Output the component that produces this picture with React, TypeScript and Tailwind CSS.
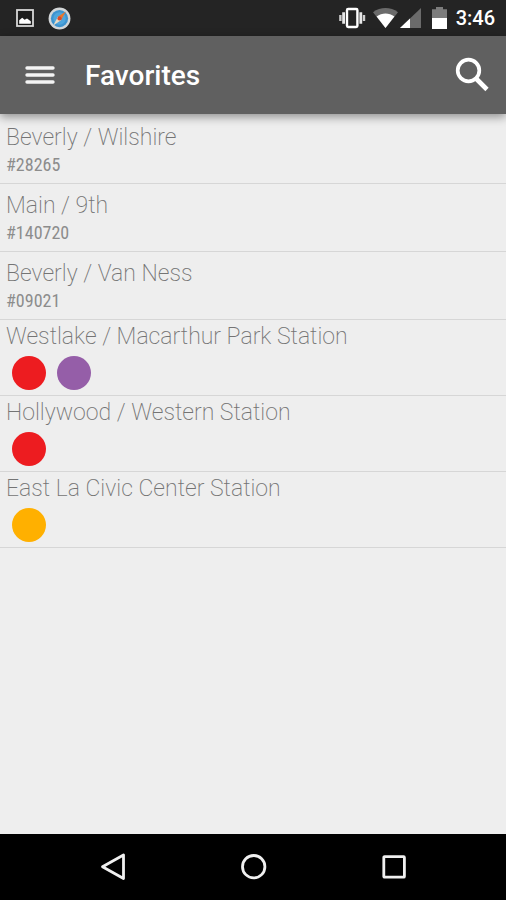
import React from "react";

type Favorite = {
  name: string;
  stop?: string;
  lines?: { label: string; color: string }[];
};

const RED = { label: "Red Line", color: "bg-[#ed1c20]" };
const PURPLE = { label: "Purple Line", color: "bg-[#955ea8]" };
const GOLD = { label: "Gold Line", color: "bg-[#ffb000]" };

const favorites: Favorite[] = [
  { name: "Beverly / Wilshire", stop: "#28265" },
  { name: "Main / 9th", stop: "#140720" },
  { name: "Beverly / Van Ness", stop: "#09021" },
  { name: "Westlake / Macarthur Park Station", lines: [RED, PURPLE] },
  { name: "Hollywood / Western Station", lines: [RED] },
  { name: "East La Civic Center Station", lines: [GOLD] },
];

function StatusBar() {
  return (
    <div className="flex h-9 shrink-0 items-center bg-[#242424] pl-4 pr-[11px]">
      <svg width="18" height="18" viewBox="0 0 18 18" aria-hidden="true">
        <rect x="1" y="1" width="16" height="16" fill="#1c1c1c" stroke="#d8d8d8" strokeWidth="1.8" />
        <path d="M3.2 14.8V11.2L6.2 8.8L8.6 10.8L11 9.6L14.8 12.2V14.8Z" fill="#fff" />
      </svg>
      <svg className="ml-[14px]" width="23" height="23" viewBox="0 0 24 24" aria-hidden="true">
        <circle cx="12" cy="12" r="11.4" fill="#d3d6d8" />
        <circle cx="12" cy="12" r="9" fill="#3d93cf" />
        <circle cx="12" cy="12" r="6.5" fill="#4ea5dc" />
        <path d="M18.6 4.8L10.3 10.2L13.6 13.7Z" fill="#e8762c" />
        <path d="M5.4 19.2L10.3 10.2L13.6 13.7Z" fill="#e9dcc8" />
        <circle cx="12" cy="12" r="2.2" fill="#d9482b" />
      </svg>
      <div className="ml-auto flex items-center">
        <svg width="28" height="22" viewBox="0 0 28 22" aria-hidden="true">
          <rect x="9" y="2" width="10.4" height="18" rx="1.2" fill="none" stroke="#fff" strokeWidth="2.4" />
          <path d="M5.6 5.2V16.8M22.8 5.2V16.8" stroke="#e8e8e8" strokeWidth="2.8" />
          <path d="M2.4 8V14M26 8V14" stroke="#cfcfcf" strokeWidth="2.4" />
        </svg>
        <svg className="ml-[7px]" width="25" height="20" viewBox="0 0 25 20" aria-hidden="true">
          <path d="M12.5 20L0 4.2C7.5-1.4 17.5-1.4 25 4.2Z" fill="#6b6b6b" />
          <path d="M12.5 20L3.6 8.6C9 4.6 16 4.6 21.4 8.6Z" fill="#fff" />
        </svg>
        <svg className="ml-0.5" width="21" height="20" viewBox="0 0 21 20" aria-hidden="true">
          <path d="M21 0V20H0Z" fill="#6b6b6b" />
          <path d="M10 10.5V20H0Z" fill="#fff" />
        </svg>
        <svg className="ml-[11px]" width="15" height="22" viewBox="0 0 15 22" aria-hidden="true">
          <path d="M0 2.2H4V0H11V2.2H15V11H0Z" fill="#7c7c7c" />
          <path d="M0 11H15V22H0Z" fill="#fff" />
        </svg>
        <time className="ml-[9px] text-xl leading-6 font-medium text-white">3:46</time>
      </div>
    </div>
  );
}

function AppBar() {
  return (
    <header className="relative flex h-[78px] shrink-0 items-center bg-[#606060] pl-6 pr-4 shadow-[0_3px_9px_rgba(0,0,0,0.4)]">
      <button type="button" aria-label="Open menu" className="block">
        <svg width="32" height="22" viewBox="0 0 32 22" stroke="#f4f4f4" strokeWidth="3.4" strokeLinecap="round">
          <path d="M3 4H29M3 11H29M3 18H29" />
        </svg>
      </button>
      <h1 className="ml-[29px] pt-0.5 text-[28px] leading-8 font-medium text-white">Favorites</h1>
      <button type="button" aria-label="Search" className="ml-auto block">
        <svg width="36" height="36" viewBox="0 0 36 36" fill="none" stroke="#fff">
          <circle cx="14.5" cy="13.5" r="10.8" strokeWidth="3.7" />
          <path d="M22 21.5L33 32.5" strokeWidth="4.6" />
        </svg>
      </button>
    </header>
  );
}

function FavoriteRow({ favorite }: { favorite: Favorite }) {
  const spacing = favorite.stop ? "h-[68px] pt-2" : "h-[76px] pt-[3px]";
  return (
    <li className={`border-b border-[#d6d6d6] px-1.5 ${spacing}`}>
      <h2 className="text-[23px] leading-7 font-extralight text-[#747474]">{favorite.name}</h2>
      {favorite.stop && (
        <p className="font-['Roboto_Condensed','Roboto',sans-serif] text-lg leading-[25px] text-[#8c8c8c]">
          {favorite.stop}
        </p>
      )}
      {favorite.lines && (
        <div className="flex gap-[11px] px-1.5 pt-[5px]">
          {favorite.lines.map((line) => (
            <span
              key={line.label}
              role="img"
              aria-label={line.label}
              className={`size-[34px] rounded-full ${line.color}`}
            />
          ))}
        </div>
      )}
    </li>
  );
}

function NavigationBar() {
  return (
    <nav className="flex h-[66px] shrink-0 items-center justify-center bg-black">
      <button type="button" aria-label="Back" className="flex w-[140px] justify-center">
        <svg width="28" height="28" viewBox="0 0 28 28" fill="none" stroke="#f0f0f0" strokeWidth="2.8" strokeLinejoin="round">
          <path d="M24.5 2V25.5L3.5 13.7Z" />
        </svg>
      </button>
      <button type="button" aria-label="Home" className="flex w-[140px] justify-center">
        <svg width="28" height="28" viewBox="0 0 28 28" fill="none" stroke="#f0f0f0" strokeWidth="2.8">
          <circle cx="14.7" cy="13.7" r="11.2" />
        </svg>
      </button>
      <button type="button" aria-label="Recent apps" className="flex w-[140px] justify-center">
        <svg width="28" height="28" viewBox="0 0 28 28" fill="none" stroke="#f0f0f0" strokeWidth="2.8" strokeLinejoin="round">
          <rect x="4.8" y="3.6" width="20.6" height="20.6" rx="0.8" />
        </svg>
      </button>
    </nav>
  );
}

export default function App() {
  return (
    <div className="flex min-h-screen flex-col bg-[#eeeeee] font-['Roboto',sans-serif]">
      <StatusBar />
      <AppBar />
      <main className="flex-1 pt-0.5">
        <ul>
          {favorites.map((favorite) => (
            <FavoriteRow key={favorite.name} favorite={favorite} />
          ))}
        </ul>
      </main>
      <NavigationBar />
    </div>
  );
}
